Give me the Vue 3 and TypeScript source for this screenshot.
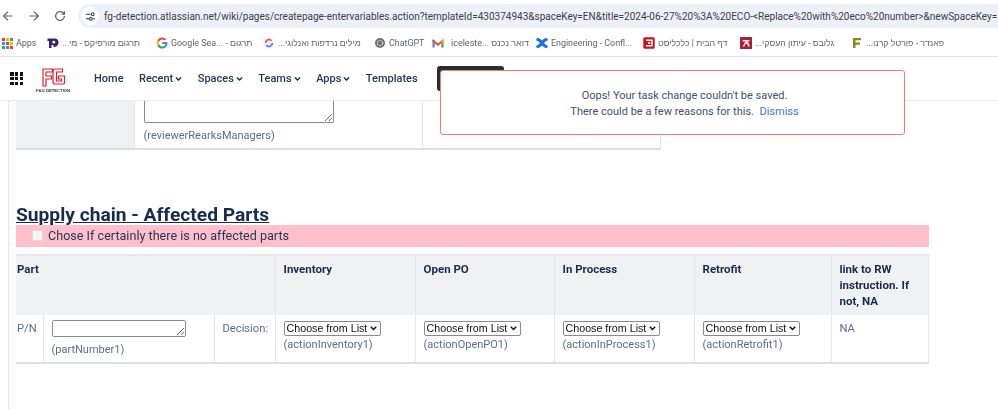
<script setup lang="ts">
interface Bookmark { icon: string; label: string; width: number; rtl?: boolean }

const bookmarks: Bookmark[] = [
  { icon: 'apps', label: 'Apps', width: 46 },
  { icon: 'morfix', label: 'תרגום מורפיקס - מי...', width: 109, rtl: true },
  { icon: 'google', label: 'Google Sea... - תרגום', width: 107 },
  { icon: 'sync', label: 'מילים נרדפות ואנלוגי...', width: 111, rtl: true },
  { icon: 'gpt', label: 'ChatGPT', width: 58 },
  { icon: 'gmail', label: 'iceleste... דואר נכנס', width: 104 },
  { icon: 'conf', label: 'Engineering - Confl...', width: 107 },
  { icon: 'calc', label: 'דף הבית | כלכליסט', width: 97, rtl: true },
  { icon: 'globes', label: 'גלובס - עיתון העסקי...', width: 111, rtl: true },
  { icon: 'fund', label: 'פאנדר - פורטל קרנו...', width: 100, rtl: true },
]

const navItems = [
  { label: 'Home', menu: false },
  { label: 'Recent', menu: true },
  { label: 'Spaces', menu: true },
  { label: 'Teams', menu: true },
  { label: 'Apps', menu: true },
  { label: 'Templates', menu: false },
]

const headers = ['Inventory', 'Open PO', 'In Process', 'Retrofit']
const actions = ['actionInventory1', 'actionOpenPO1', 'actionInProcess1', 'actionRetrofit1']
const gridDots = [0, 1, 2, 3, 4, 5, 6, 7, 8]
const appColors = ['#ea4335', '#fbbc04', '#34a853', '#4285f4', '#ea4335', '#fbbc04', '#34a853', '#4285f4', '#ea4335']
</script>

<template>
  <div class="page">
    <div class="toolbar">
      <svg class="tool" viewBox="0 0 16 16"><path d="M13 8H3.500M8 3 3 8l5 5" /></svg>
      <svg class="tool" viewBox="0 0 16 16"><path d="M3 8h9.500M8 3l5 5-5 5" /></svg>
      <svg class="tool" viewBox="0 0 16 16"><path d="M13 8a5 5 0 1 1-1.500-3.500L13 6M13 2.500V6H9.500" /></svg>
      <div class="omnibox">
        <span class="tune">
          <svg viewBox="0 0 12 12"><path d="M1 3.500h5M9 8.500h2M1 8.500h4" /><circle cx="8.500" cy="3.500" r="1.500" /><circle cx="6.500" cy="8.500" r="1.500" /></svg>
        </span>
        <span class="url">fg-detection.atlassian.net/wiki/pages/createpage-entervariables.action?templateId=430374943&amp;spaceKey=EN&amp;title=2024-06-27%20%3A%20ECO-&lt;Replace%20with%20eco%20number&gt;&amp;newSpaceKey=</span>
      </div>
    </div>

    <div class="bookmarks">
      <div v-for="b in bookmarks" :key="b.icon" class="bookmark" :class="'bm-' + b.icon" :style="{ width: b.width + 'px' }">
        <span class="bm-icon">
          <span v-if="b.icon === 'apps'" class="apps-grid"><i v-for="(c, i) in appColors" :key="i" :style="{ background: c }"></i></span>
          <svg v-else-if="b.icon === 'morfix'" viewBox="0 0 12 12"><path fill="#3f1d78" d="M0.500 1.500h7a4 4 0 0 1 4 4 4.500 4.500 0 0 1-4.500 4.500H6.500V8H4.500v3H2V4H0.500z" /><circle cx="6.800" cy="5.200" r="1.400" fill="#fff" /></svg>
          <svg v-else-if="b.icon === 'google'" viewBox="0 0 12 12"><path fill="none" stroke="#ea4335" stroke-width="2" d="M9.500 2.800A4.500 4.500 0 0 0 2.200 4" /><path fill="none" stroke="#fbbc04" stroke-width="2" d="M2.200 4a4.500 4.500 0 0 0 0 4" /><path fill="none" stroke="#34a853" stroke-width="2" d="M2.200 8a4.500 4.500 0 0 0 7.300 1.200" /><path fill="none" stroke="#4285f4" stroke-width="2" d="M9.500 9.200A4.500 4.500 0 0 0 10.500 6H6.200" /></svg>
          <svg v-else-if="b.icon === 'sync'" viewBox="0 0 12 12"><circle cx="6" cy="6" r="5.800" fill="#eef0f9" /><path fill="none" stroke="#e8503a" stroke-width="1.500" d="M2.600 6a3.400 3.400 0 0 1 6-2.200" /><path fill="none" stroke="#3a7be8" stroke-width="1.500" d="M9.400 6a3.400 3.400 0 0 1-6 2.200" /></svg>
          <svg v-else-if="b.icon === 'gpt'" viewBox="0 0 12 12"><circle cx="6" cy="6" r="5" fill="#6f6f6f" /><circle cx="6" cy="6" r="2.700" fill="none" stroke="#e4e4e4" stroke-width="1.100" stroke-dasharray="2 1" /></svg>
          <svg v-else-if="b.icon === 'gmail'" viewBox="0 0 12 12"><path fill="#4285f4" d="M0.500 3h2.200v7.500H0.500z" /><path fill="#34a853" d="M9.300 3h2.200v7.500H9.300z" /><path fill="#ea4335" d="M0.500 2 6 6.500 11.500 2V4.500L6 9 0.500 4.500z" /><path fill="#fbbc04" d="M9.300 3.800 11.500 2V4.500L9.300 6z" /></svg>
          <svg v-else-if="b.icon === 'conf'" viewBox="0 0 12 12"><path fill="none" stroke="#1f6fdc" stroke-width="3.200" stroke-linecap="round" d="M1.800 2.500c3 0 5.400 7 8.400 7M10.200 2.500c-3 0-5.400 7-8.400 7" /></svg>
          <svg v-else-if="b.icon === 'calc'" viewBox="0 0 12 12"><rect x="0.300" y="0.300" width="11.400" height="11.400" rx="1.500" fill="#c8141e" /><path fill="none" stroke="#fff" stroke-width="1.400" d="M3 3.300h6v5.400H3M5 6h2.500" /></svg>
          <svg v-else-if="b.icon === 'globes'" viewBox="0 0 12 12"><rect width="12" height="12" fill="#a3203f" /><path fill="#f2d8de" d="M2.500 3h7v1.500H8L10 9.500H8L7 7H5.500L4.500 9.500H2.500L5.300 4.500H2.500z" /></svg>
          <svg v-else viewBox="0 0 12 12"><path fill="#8a8a16" d="M2 1h8v2.200H4.500v2.300H9v2.200H4.500V11H2z" /></svg>
        </span>
        <span class="bm-label" :class="{ hebrew: b.rtl }" :dir="b.rtl ? 'rtl' : 'ltr'">{{ b.label }}</span>
      </div>
    </div>

    <nav class="nav">
      <span class="grid-icon"><i v-for="d in gridDots" :key="d"></i></span>
      <svg class="logo" viewBox="0 0 36 26">
        <g fill="none" stroke="#d8202c" stroke-width="1.200">
          <path d="M8 19V2h9.500V5H11v4h5.500v3H11v7z" />
          <path d="M27.500 5V2h-7.500a2 2 0 0 0-2 2V15a2 2 0 0 0 2 2h8a1.500 1.500 0 0 0 1.500-1.500V9h-6v3h3v2h-5V5z" />
        </g>
        <text x="18" y="25" text-anchor="middle" class="logo-text">F&amp;G DETECTION</text>
      </svg>
      <div class="nav-items">
        <a v-for="n in navItems" :key="n.label" class="nav-item">
          {{ n.label }}
          <svg v-if="n.menu" class="chev" viewBox="0 0 8 6"><path d="M1 1.200 4 4.200 7 1.200" /></svg>
        </a>
      </div>
      <div class="create"></div>
    </nav>

    <main class="main">
      <table class="top-table">
        <colgroup><col class="c-a" /><col class="c-b" /><col class="c-c" /></colgroup>
        <tbody>
          <tr>
            <th></th>
            <td>
              <textarea class="cut-area"></textarea>
              <div class="var">(reviewerRearksManagers)</div>
            </td>
            <td></td>
          </tr>
        </tbody>
      </table>

      <h2 class="title">Supply chain - Affected Parts</h2>
      <div class="pink">
        <input type="checkbox" class="check" />
        <span>Chose If certainly there is no affected parts</span>
      </div>

      <table class="parts">
        <colgroup>
          <col class="p-1" /><col class="p-2" /><col class="p-3" />
          <col class="p-4" /><col class="p-5" /><col class="p-6" /><col class="p-7" /><col />
        </colgroup>
        <thead>
          <tr>
            <th colspan="3" class="part-head">Part</th>
            <th v-for="h in headers" :key="h">{{ h }}</th>
            <th>link to RW instruction. If not, NA</th>
          </tr>
        </thead>
        <tbody>
          <tr>
            <td class="pn">P/N</td>
            <td>
              <textarea class="part-area"></textarea>
              <div class="var part-var">(partNumber1)</div>
            </td>
            <td class="decision">Decision:</td>
            <td v-for="a in actions" :key="a">
              <select class="sel"><option>Choose from List</option></select>
              <div class="var action-var">({{ a }})</div>
            </td>
            <td>NA</td>
          </tr>
        </tbody>
      </table>
    </main>

    <div class="flag">
      <div>Oops! Your task change couldn't be saved.</div>
      <div>There could be a few reasons for this.&nbsp; <a class="dismiss">Dismiss</a></div>
    </div>
  </div>
</template>

<style scoped>
.page {
  position: relative;
  width: 998px;
  height: 409px;
  overflow: hidden;
  background: #fff;
  font-family: Roboto, "Liberation Sans", sans-serif;
  color: #42526e;
}
.toolbar {
  display: flex;
  align-items: center;
  height: 24px;
  padding: 4px 0 2px 0;
}
.tool {
  flex: none;
  width: 14px;
  height: 14px;
  margin-left: 1px;
  margin-right: 11px;
  fill: none;
  stroke: #5f6368;
  stroke-width: 1.400;
}
.omnibox {
  flex: 1;
  min-width: 0;
  height: 24px;
  display: flex;
  align-items: center;
  gap: 5px;
  background: #edf0f8;
  border-radius: 12px 0 0 12px;
  padding-left: 3px;
  overflow: hidden;
}
.tune {
  flex: none;
  width: 18px;
  height: 18px;
  border-radius: 50%;
  background: #fff;
  display: flex;
  align-items: center;
  justify-content: center;
}
.tune svg {
  width: 11px;
  height: 11px;
  fill: none;
  stroke: #333;
  stroke-width: 1.100;
}
.url {
  white-space: nowrap;
  font-size: 10px;
  color: #3c4043;
}
.bookmarks {
  display: flex;
  align-items: center;
  height: 27px;
  padding-left: 1px;
  border-bottom: 1px solid #e3e3e3;
  box-sizing: border-box;
}
.bookmark {
  flex: none;
  display: flex;
  align-items: center;
  gap: 3px;
  white-space: nowrap;
}
.bm-icon {
  flex: none;
  width: 12px;
  height: 12px;
  display: flex;
  align-items: center;
  justify-content: center;
}
.bm-icon svg { width: 12px; height: 12px; }
.apps-grid {
  display: grid;
  grid-template-columns: repeat(3, 3px);
  grid-auto-rows: 3px;
  gap: 1px;
}
.apps-grid i { display: block; }
.bm-label {
  font-size: 8.900px;
  color: #5f6368;
}
.bm-label.hebrew { font-size: 8.800px; }
.bm-gmail .bm-label { margin-left: 4px; font-size: 9px; }
.nav {
  display: flex;
  align-items: center;
  height: 44px;
  padding-left: 10px;
  border-bottom: 1px solid #ebecf0;
  box-sizing: border-box;
}
.grid-icon {
  flex: none;
  display: grid;
  grid-template-columns: repeat(3, 3.500px);
  grid-auto-rows: 3.500px;
  gap: 1.250px;
}
.grid-icon i { display: block; background: #111; }
.logo {
  flex: none;
  width: 36px;
  height: 26px;
  margin-left: 12px;
  margin-top: 2px;
}
.logo-text {
  font-size: 4.200px;
  font-weight: 700;
  fill: #333;
  font-family: "Liberation Sans", sans-serif;
}
.nav-items {
  display: flex;
  align-items: center;
  gap: 15.500px;
  margin-left: 23px;
}
.nav-item {
  display: flex;
  align-items: center;
  gap: 2px;
  font-size: 11px;
  font-weight: 500;
  color: #253858;
  white-space: nowrap;
}
.chev {
  width: 7px;
  height: 6px;
  fill: none;
  stroke: #172b4d;
  stroke-width: 1.500;
}
.create {
  flex: none;
  width: 67px;
  height: 25px;
  margin-left: 19px;
  background: #2b2b2b;
  border-radius: 3px;
}
.main {
  margin-left: 8px;
  padding-left: 7px;
  border-left: 1px dotted #dcdcdc;
  height: 308px;
}
table { border-collapse: collapse; table-layout: fixed; }
.top-table { width: 645px; }
.c-a { width: 118px; }
.c-b { width: 288px; }
.top-table th { background: #f0f1f3; border-bottom: 2px solid #dadce4; }
.top-table td {
  padding: 0 9px;
  border-left: 1px solid #e3e5ea;
  border-right: 1px solid #e3e5ea;
  border-bottom: 2px solid #dadce4;
  height: 47px;
  vertical-align: top;
}
.cut-area {
  display: block;
  width: 190px;
  height: 22px;
  box-sizing: border-box;
  border: 1px solid #8a8a8a;
  border-top: 0;
  border-radius: 0 0 2px 2px;
  margin: 0;
}
.var {
  font-size: 11px;
  line-height: 16px;
  color: #5e6c84;
  white-space: nowrap;
}
.top-table .var { margin-top: 5px; }
.title {
  margin: 53px 0 0;
  height: 22px;
  font-size: 19.200px;
  line-height: 24px;
  font-weight: 700;
  color: #172b4d;
  text-decoration: underline;
}
.pink {
  display: flex;
  align-items: flex-start;
  width: 913px;
  height: 22px;
  background: #ffc0cb;
  font-size: 12.600px;
  line-height: 22px;
  color: #253858;
}
.check {
  appearance: none;
  flex: none;
  width: 11px;
  height: 11px;
  margin: 5px 5px 0 16px;
  background: #f5f5f5;
  border: 1px solid #dcdcdc;
  border-radius: 2px;
  box-sizing: border-box;
}
.parts {
  width: 913px;
  margin-top: 7px;
  font-size: 11.200px;
}
.p-1 { width: 27px; }
.p-2 { width: 171px; }
.p-3 { width: 61px; }
.p-4 { width: 140px; }
.p-5 { width: 139px; }
.p-6 { width: 140px; }
.p-7 { width: 137px; }
.parts th {
  height: 60px;
  box-sizing: border-box;
  padding: 5px 8px 4px;
  background: #f0f1f3;
  vertical-align: top;
  text-align: left;
  font-size: 11.500px;
  line-height: 16px;
  font-weight: 700;
  color: #172b4d;
  border-top: 2px solid #e6e7ec;
  border-left: 1px solid #d8dae2;
  border-right: 1px solid #e3e5ea;
}
.parts .part-head { padding-left: 1px; border-left: 0; }
.parts td {
  padding: 6px 8px 0;
  height: 48px;
  box-sizing: border-box;
  vertical-align: top;
  line-height: 16px;
  color: #5e6c84;
  border-left: 1px solid #e3e5ea;
  border-right: 1px solid #e3e5ea;
  border-bottom: 2px solid #dadce4;
}
.parts .pn { padding-left: 1px; padding-right: 0; border-left: 0; }
.parts .decision { padding-left: 8px; padding-right: 0; white-space: nowrap; }
.part-area {
  display: block;
  width: 134px;
  height: 17px;
  margin: -1px 0 0;
  box-sizing: border-box;
  border: 1px solid #8a8a8a;
  border-radius: 2px;
}
.part-var { margin-top: 5px; }
.action-var { margin-top: 1px; }
.sel {
  appearance: none;
  display: block;
  width: 97px;
  height: 15px;
  padding: 0 0 0 2px;
  box-sizing: border-box;
  font-family: "Liberation Sans", sans-serif;
  font-size: 10.700px;
  line-height: 13px;
  color: #111;
  background: #fff url("data:image/svg+xml,%3Csvg xmlns='http://www.w3.org/2000/svg' width='7' height='5'%3E%3Cpath d='M.8.8 3.500 3.500 6.200.8' fill='none' stroke='%23111' stroke-width='1.500'/%3E%3C/svg%3E") no-repeat right 3px center;
  border: 1px solid #8a8a8a;
  border-radius: 2px;
}
.flag {
  position: absolute;
  left: 440px;
  top: 70px;
  width: 465px;
  height: 65px;
  box-sizing: border-box;
  padding: 17px 0 0 24px;
  background: #fff;
  border: 1px solid #ef7b7b;
  border-radius: 3px;
  text-align: center;
  font-size: 11px;
  line-height: 16px;
  color: #42526e;
}
.dismiss { color: #3b78d8; }
</style>

<style>
html, body { margin: 0; padding: 0; background: #fff; }
</style>
